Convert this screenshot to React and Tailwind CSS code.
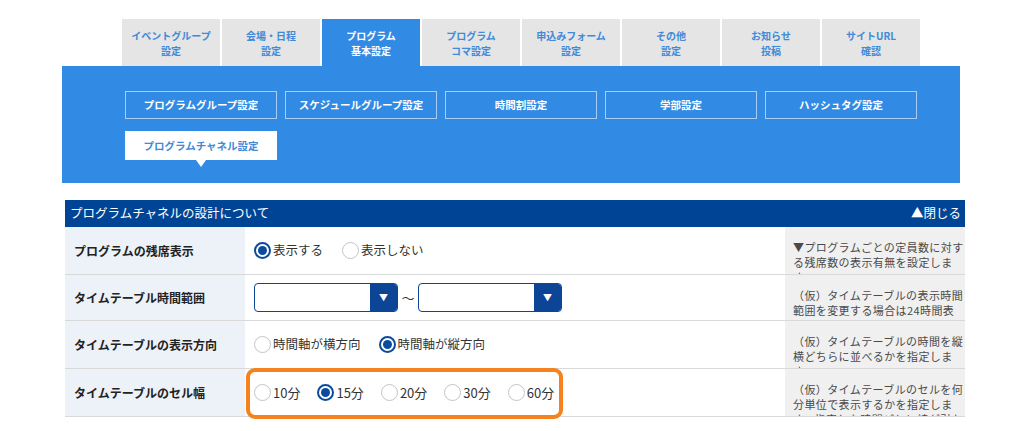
import React from "react";

const tabs = [
  ["イベントグループ", "設定"],
  ["会場・日程", "設定"],
  ["プログラム", "基本設定"],
  ["プログラム", "コマ設定"],
  ["申込みフォーム", "設定"],
  ["その他", "設定"],
  ["お知らせ", "投稿"],
  ["サイトURL", "確認"],
];

const subs = [
  "プログラムグループ設定",
  "スケジュールグループ設定",
  "時間割設定",
  "学部設定",
  "ハッシュタグ設定",
];

function Radio({ checked, label, textClass = "text-[12.5px]" }) {
  return (
    <div className="flex items-center">
      {checked ? (
        <span className="w-[17px] h-[17px] rounded-full border-2 border-[#0b4a9c] bg-white flex items-center justify-center">
          <span className="w-[9px] h-[9px] rounded-full bg-[#0b4a9c]" />
        </span>
      ) : (
        <span className="w-[17px] h-[17px] rounded-full border-[1.5px] border-[#c4c4c4] bg-white" />
      )}
      <span className={"ml-[2px] text-[#333] leading-none " + textClass}>{label}</span>
    </div>
  );
}

function Select() {
  return (
    <div className="w-[144px] h-[29px] rounded-[4px] border border-[#0d4596] bg-white flex justify-end overflow-hidden">
      <div className="w-[27px] h-full bg-[#0d4596] flex items-center justify-center">
        <span className="text-white text-[9px] leading-none">▼</span>
      </div>
    </div>
  );
}

function Row({ label, desc, children, extra, hClass = "h-[48px]" }) {
  return (
    <div className={"grid grid-cols-[180px_540px_180px] border-b border-[#d9d9d9] " + hClass}>
      <div className="bg-[#edf2f9] flex items-center pl-[9px] text-[12px] font-bold text-[#222]">
        {label}
      </div>
      <div className="relative flex items-center pl-[9px]">
        {children}
        {extra}
      </div>
      <div className="bg-[#f0f0f0] overflow-hidden pl-[8px] pr-0 pt-[13px] text-[11px] leading-[15px] text-[#4a4a4a] tracking-[0.4px]">
        {desc}
      </div>
    </div>
  );
}

export default function App() {
  return (
    <div
      className="w-[1027px] h-[431px] bg-white overflow-hidden"
      style={{ fontFamily: '"Noto Sans CJK JP", "Noto Sans", sans-serif' }}
    >
      {/* Tabs */}
      <div className="flex gap-[2px] pl-[122px] pt-[19px]">
        {tabs.map((t, i) => {
          const active = i === 2;
          return (
            <div
              key={i}
              className={
                "w-[98px] h-[47px] flex flex-col items-center justify-center text-[10px] font-bold leading-[15px] " +
                (active ? "bg-[#318ae3] text-white" : "bg-[#e5e5e5] text-[#3f8ad9]")
              }
            >
              <span>{t[0]}</span>
              <span>{t[1]}</span>
            </div>
          );
        })}
      </div>

      {/* Blue band */}
      <div className="ml-[62px] w-[898px] h-[117px] bg-[#318ae3] pl-[63px] pt-[25px]">
        <div className="grid grid-cols-[repeat(5,152px)] gap-x-[8px] gap-y-[12px]">
          {subs.map((s) => (
            <div
              key={s}
              className="h-[28px] border border-[#a9cdf3] flex items-center justify-center text-white text-[10.5px] font-bold"
            >
              {s}
            </div>
          ))}
          <div className="relative h-[29px] bg-white flex items-center justify-center text-[#3f8ad9] text-[10.5px] font-bold">
            プログラムチャネル設定
            <span className="absolute left-1/2 -translate-x-1/2 top-full w-0 h-0 border-l-[5px] border-r-[5px] border-t-[7px] border-l-transparent border-r-transparent border-t-white" />
          </div>
        </div>
      </div>

      {/* Table */}
      <div className="ml-[65px] w-[900px] mt-[17px]">
        <div className="h-[27px] bg-[#004595] flex items-center justify-between pl-[5px] pr-[4px] text-white text-[12.5px]">
          <span>プログラムチャネルの設計について</span>
          <span>▲閉じる</span>
        </div>
        <Row
          label="プログラムの残席表示"
          desc="▼プログラムごとの定員数に対する残席数の表示有無を設定します。"
        >
          <div className="flex items-center gap-[19px]">
            <Radio checked label="表示する" />
            <Radio label="表示しない" />
          </div>
        </Row>
        <Row
          hClass="h-[46px]"
          label="タイムテーブル時間範囲"
          desc="（仮）タイムテーブルの表示時間範囲を変更する場合は24時間表記で指定します。"
        >
          <div className="flex items-center">
            <Select />
            <span className="w-[20px] text-center text-[13px] text-[#333]">〜</span>
            <Select />
          </div>
        </Row>
        <Row
          label="タイムテーブルの表示方向"
          desc="（仮）タイムテーブルの時間を縦横どちらに並べるかを指定します。"
        >
          <div className="flex items-center gap-[18px]">
            <Radio label="時間軸が横方向" />
            <Radio checked label="時間軸が縦方向" />
          </div>
        </Row>
        <Row
          label="タイムテーブルのセル幅"
          desc="（仮）タイムテーブルのセルを何分単位で表示するかを指定します。指定した時間ごとに線が引かれます。"
          extra={
            <div className="absolute left-[1px] top-[-1px] w-[317px] h-[51px] border-[4px] border-[#f6821f] rounded-[9px]" />
          }
        >
          <div className="flex items-center gap-[17px]">
            <Radio label="10分" textClass="text-[13px]" />
            <Radio checked label="15分" textClass="text-[13px]" />
            <Radio label="20分" textClass="text-[13px]" />
            <Radio label="30分" textClass="text-[13px]" />
            <Radio label="60分" textClass="text-[13px]" />
          </div>
        </Row>
      </div>
    </div>
  );
}
